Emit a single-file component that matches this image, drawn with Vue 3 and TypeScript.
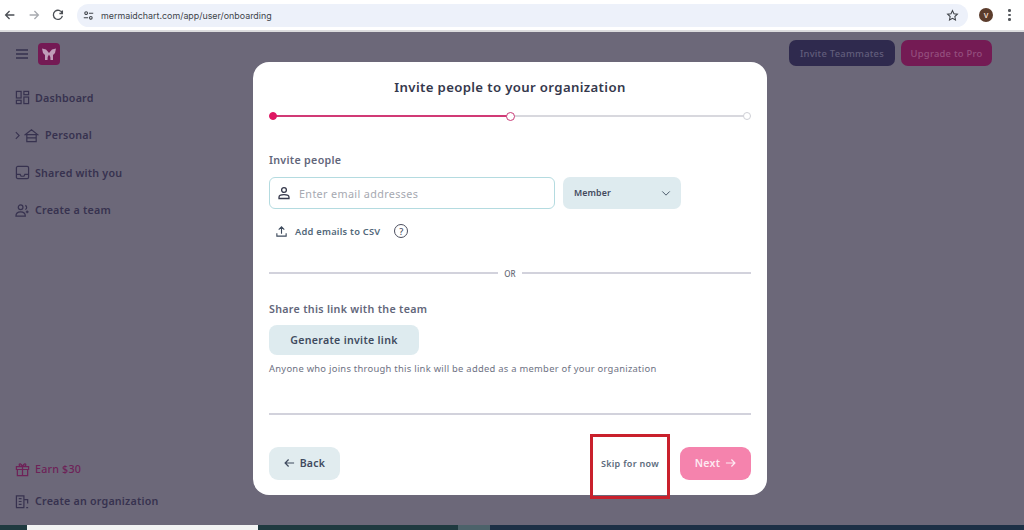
<script setup lang="ts">
const navItems: { label: string; kind: string }[] = [
  { label: 'Dashboard', kind: 'dash' },
  { label: 'Personal', kind: 'home' },
  { label: 'Shared with you', kind: 'inbox' },
  { label: 'Create a team', kind: 'team' },
]
</script>

<template>
  <div class="root">
    <header class="chrome">
      <svg class="cicon" viewBox="0 0 16 16"><path d="M13 8H3.500M7.500 3.500 3 8l4.500 4.500" /></svg>
      <svg class="cicon dim" viewBox="0 0 16 16"><path d="M3 8h9.500M8.500 3.500 13 8l-4.500 4.500" /></svg>
      <svg class="cicon" viewBox="0 0 16 16"><path d="M12.800 6A5.200 5.200 0 1 0 13 9M13 2.800V6.300H9.600" /></svg>
      <div class="omnibox">
        <svg class="tune" viewBox="0 0 14 14"><circle cx="4" cy="4" r="1.700" /><path d="M7.500 4H13M1 10h5.500" /><circle cx="10" cy="10" r="1.700" /></svg>
        <span class="url">mermaidchart.com/app/user/onboarding</span>
        <svg class="star" viewBox="0 0 16 16"><path d="m8 2 1.800 3.900 4.200.5-3.100 2.900.8 4.200L8 11.400l-3.700 2.100.8-4.200L2 6.400l4.200-.5z" /></svg>
      </div>
      <span class="avatar">V</span>
      <span class="kebab"><i></i><i></i><i></i></span>
    </header>

    <main class="page">
      <aside class="sidebar">
        <div class="brand">
          <svg class="burger" viewBox="0 0 14 12"><path d="M1 2h12M1 6h12M1 10h12" /></svg>
          <span class="logo">
            <svg viewBox="0 0 22 22"><path d="M4 5.500 8 6.500 11 10 14 6.500 18 5.500 17 10 15 12V17H12.500Q12.500 13 11 11.500 9.500 13 9.500 17H7V12L5 10z" /></svg>
          </span>
        </div>
        <nav class="nav">
          <a v-for="item in navItems" :key="item.label" class="nav-item" :class="{ nested: item.kind === 'home' }">
            <svg v-if="item.kind === 'home'" class="chev" viewBox="0 0 6 10"><path d="m1 1 4 4-4 4" /></svg>
            <svg class="nav-icon" viewBox="0 0 16 16">
              <template v-if="item.kind === 'dash'">
                <rect x="1.500" y="1.500" width="5" height="7" /><rect x="9.500" y="1.500" width="5" height="3.500" /><rect x="1.500" y="11" width="5" height="3.500" /><rect x="9.500" y="7.500" width="5" height="7" />
              </template>
              <template v-else-if="item.kind === 'home'">
                <path d="M1.500 7 8 2l6.500 5zM3 7v7.500h10V7M3 10.500h10" />
              </template>
              <template v-else-if="item.kind === 'inbox'">
                <rect x="1.500" y="1.500" width="13" height="13" rx="1.500" /><path d="M1.500 10h4l1 2h3l1-2h4" />
              </template>
              <template v-else>
                <circle cx="6" cy="4.500" r="2.500" /><path d="M1 14c0-6 10-6 10 0zM11 2.500a2.500 2.500 0 0 1 0 4.500M13 8v3M11.500 9.500h3" />
              </template>
            </svg>
            <span>{{ item.label }}</span>
          </a>
        </nav>
        <div class="side-bottom">
          <a class="nav-item earn">
            <svg class="nav-icon" viewBox="0 0 16 16"><path d="M1.500 5h13v3h-13zM2.500 8v6.500h11V8M8 5v9.500M8 5C6 5 4.500 4 4.500 2.800S6.500 1 8 5c1.500-4 3.500-3.400 3.500-2.200S10 5 8 5z" /></svg>
            <span>Earn $30</span>
          </a>
          <a class="nav-item">
            <svg class="nav-icon" viewBox="0 0 16 16"><path d="M1.500 14.500V2h8v12.500M9.500 6h4v4M1 14.500h9M4 5h3M4 8h3M4 11h3M12 14.500h2" /></svg>
            <span>Create an organization</span>
          </a>
        </div>
      </aside>

      <div class="top-actions">
        <button class="top-btn invite" type="button">Invite Teammates</button>
        <button class="top-btn upgrade" type="button">Upgrade to Pro</button>
      </div>

      <div class="overlay">
        <section class="card">
          <h1 class="title">Invite people to your organization</h1>

          <div class="stepper">
            <span class="dot done"></span>
            <span class="bar active"></span>
            <span class="dot current"></span>
            <span class="bar"></span>
            <span class="dot"></span>
          </div>

          <label class="label invite-label">Invite people</label>
          <div class="invite-row">
            <div class="field">
              <svg class="person" viewBox="0 0 14 14"><circle cx="7" cy="4" r="2.400" /><path d="M2 12.500v-1.300c0-1.500 1.500-2.500 5-2.500s5 1 5 2.500v1.300z" /></svg>
              <span class="placeholder">Enter email addresses</span>
            </div>
            <div class="select">
              <span>Member</span>
              <svg viewBox="0 0 12 8"><path d="m1.500 1.500 4.500 4.500 4.500-4.500" /></svg>
            </div>
          </div>

          <div class="csv">
            <svg class="upload" viewBox="0 0 14 14"><path d="M7 9.500V2M4 5l3-3 3 3M2 9v3h10V9" /></svg>
            <span>Add emails to CSV</span>
            <span class="help">?</span>
          </div>

          <div class="or"><span>OR</span></div>

          <label class="label share-label">Share this link with the team</label>
          <button class="generate" type="button">Generate invite link</button>
          <p class="hint">Anyone who joins through this link will be added as a member of your organization</p>

          <div class="rule"></div>

          <footer class="foot">
            <button class="back" type="button">
              <svg viewBox="0 0 12 10"><path d="M11 5H1.500M5 1.200 1.200 5 5 8.800" /></svg>
              Back
            </button>
            <span class="skip">Skip for now</span>
            <button class="next" type="button">
              Next
              <svg viewBox="0 0 12 10"><path d="M1 5h9.500M7 1.200 10.800 5 7 8.800" /></svg>
            </button>
          </footer>
          <span class="callout"></span>
        </section>
      </div>
    </main>

    <div class="taskbar">
      <span class="tb-a"></span><span class="tb-b"></span><span class="tb-c"></span><span class="tb-d"></span><span class="tb-e"></span>
    </div>
  </div>
</template>

<style>
html, body { margin: 0; background: #fff; }
</style>

<style scoped>
.root {
  width: 1024px;
  height: 530px;
  display: flex;
  flex-direction: column;
  overflow: hidden;
  font-family: "Noto Sans", "Open Sans", sans-serif;
}
.chrome {
  height: 32px;
  flex: none;
  box-sizing: border-box;
  border-bottom: 2px solid #dcdcde;
  background: #fff;
  display: flex;
  align-items: center;
  padding: 0 9px 0 3px;
}
.cicon { width: 14px; height: 14px; fill: none; stroke: #4b4f55; stroke-width: 1.500; margin: 0 5px 1px 0; flex: none; }
.cicon + .cicon { margin-left: 5px; }
.cicon.dim { stroke: #a8abb0; }
.omnibox {
  margin-left: 7px;
  width: 891px;
  height: 23px;
  flex: none;
  border-radius: 12px;
  background: #edf1fa;
  display: flex;
  align-items: center;
  padding: 0 9px 0 6px;
  box-sizing: border-box;
  margin-right: 11px;
}
.tune { width: 11px; height: 11px; fill: none; stroke: #3f4349; stroke-width: 1.300; }
.url { margin-left: 7px; font: 8.900px "Inter", sans-serif; color: #40444a; flex: 1; }
.star { width: 13px; height: 13px; fill: none; stroke: #3f4349; stroke-width: 1.300; }
.avatar {
  width: 14px; height: 14px; border-radius: 50%; flex: none;
  background: #5b3c2c; color: #f2dfcf;
  font: 700 7px "Liberation Sans", sans-serif;
  display: flex; align-items: center; justify-content: center;
}
.kebab { margin-left: 15px; display: flex; flex-direction: column; gap: 2px; }
.kebab i { width: 2.500px; height: 2.500px; border-radius: 50%; background: #55595e; }

.page { position: relative; flex: 1; min-height: 0; background: #6c6879; display: flex; }
.sidebar { width: 200px; display: flex; flex-direction: column; padding: 11px 0 8px 15px; box-sizing: border-box; }
.brand { display: flex; align-items: center; gap: 9px; height: 22px; }
.burger { width: 14px; height: 12px; fill: none; stroke: #35304e; stroke-width: 1.400; }
.logo { width: 22px; height: 22px; border-radius: 4px; background: #741a54; display: flex; }
.logo svg { width: 22px; height: 22px; fill: #bf9db9; }
.nav { margin-top: 14px; display: flex; flex-direction: column; }
.nav-item {
  height: 37.500px;
  display: flex;
  align-items: center;
  gap: 5px;
  font-size: 10.700px;
  font-weight: 600;
  letter-spacing: .2px;
  color: #37324f;
}
.nav-icon { width: 15px; height: 15px; fill: none; stroke: #37324f; stroke-width: 1.300; flex: none; }
.nav-item.nested { gap: 4px; }
.nav-item.nested .nav-icon { margin-right: 2px; }
.chev { width: 5px; height: 9px; fill: none; stroke: #37324f; stroke-width: 1.300; }
.side-bottom { margin-top: auto; display: flex; flex-direction: column; }
.side-bottom .nav-item { height: 32px; }
.earn { color: #6e2258; font-weight: 500; }
.earn .nav-icon { stroke: #6e2258; }

.top-actions { position: absolute; top: 8px; right: 32px; display: flex; gap: 6px; }
.top-btn {
  height: 26px;
  border: 0;
  border-radius: 7px;
  font: 500 9.400px "Noto Sans", sans-serif;
  letter-spacing: .25px;
  padding: 0;
}
.invite { width: 106px; background: #2f2a4e; color: #625e7c; }
.upgrade { width: 91px; background: #741b54; color: #94507f; }

.overlay { position: absolute; inset: 0; display: flex; justify-content: center; align-items: flex-start; padding: 30px 4px 0 0; }
.card {
  position: relative;
  width: 514px;
  height: 433px;
  box-sizing: border-box;
  padding: 16px 16px 0;
  background: #fff;
  border-radius: 16px;
  color: #363a50;
}
.title { margin: 0; height: 18px; line-height: 18px; text-align: center; font-size: 13.200px; font-weight: 600; letter-spacing: .35px; color: #35384c; }

.stepper { margin-top: 16px; height: 8px; display: flex; align-items: center; }
.dot { width: 8px; height: 8px; flex: none; box-sizing: border-box; border-radius: 50%; border: 1.500px solid #cfd0d6; background: #fff; margin: 0 -1px; z-index: 1; }
.dot:first-child { margin-left: 0; }
.dot:last-child { margin-right: 0; }
.dot.done { background: #df1763; border-color: #df1763; }
.dot.current { border-color: #c93c78; width: 9px; height: 9px; }
.bar { flex: 1; height: 1.200px; background: #d8d8de; }
.bar.active { background: #d13a76; }

.label { display: block; font-size: 10.700px; font-weight: 600; letter-spacing: .3px; color: #62667a; line-height: 14px; }
.invite-label { margin-top: 33px; }
.invite-row { margin-top: 10px; display: flex; gap: 8px; }
.field {
  width: 286px; height: 32px; box-sizing: border-box;
  border: 1px solid #b4dbe0; border-radius: 6px;
  display: flex; align-items: center; padding-left: 7px; gap: 8px;
}
.person { width: 14px; height: 14px; fill: none; stroke: #36394c; stroke-width: 1.300; }
.placeholder { font-size: 10.800px; letter-spacing: .35px; color: #a6a9b1; }
.select {
  width: 118px; height: 32px; box-sizing: border-box; border-radius: 7px;
  background: #deebef; display: flex; align-items: center; justify-content: space-between;
  padding: 0 10px 0 11px; font-size: 8.800px; font-weight: 600; letter-spacing: .1px; color: #434a5e;
}
.select svg { width: 10px; height: 7px; fill: none; stroke: #4d5d6d; stroke-width: 1.200; }
.csv { margin-top: 13px; height: 18px; display: flex; align-items: center; padding-left: 6px; font-size: 9.300px; font-weight: 600; letter-spacing: .25px; color: #52687a; }
.upload { width: 13px; height: 13px; fill: none; stroke: #3d4a5c; stroke-width: 1.200; margin-right: 7px; }
.help {
  margin-left: 14px; width: 14px; height: 14px; box-sizing: border-box; border: 1.200px solid #4b4e5e; border-radius: 50%;
  display: flex; align-items: center; justify-content: center; font-size: 9px; font-weight: 500; color: #4b4e5e;
}
.or {
  margin-top: 26px; height: 14px; display: flex; align-items: center; gap: 6px;
  font-size: 8px; font-weight: 500; color: #6a6d7a;
}
.or::before, .or::after { content: ""; flex: 1; height: 1.500px; background: #d2d2dc; }
.share-label { margin-top: 22px; }
.generate {
  display: block; margin-top: 9px; width: 150px; height: 30px; border: 0; border-radius: 8px;
  background: #deebef; color: #404a5e; font: 600 10.600px "Noto Sans", sans-serif; letter-spacing: .3px; padding: 0;
}
.hint { margin: 7px 0 0; height: 14px; line-height: 14px; font-size: 9.400px; letter-spacing: .27px; color: #6e7283; }
.rule { margin-top: 37px; height: 1.500px; background: #d2d2dc; }
.foot { margin-top: 32px; height: 33px; display: flex; align-items: center; }
.back, .next {
  width: 71px; height: 33px; border: 0; border-radius: 9px; padding: 0;
  display: flex; align-items: center; justify-content: center; gap: 5px;
  font: 600 10.500px "Noto Sans", sans-serif; letter-spacing: .3px;
}
.back { background: #e1ecef; color: #3f4a5e; }
.back svg, .next svg { width: 11px; height: 10px; fill: none; stroke: currentColor; stroke-width: 1.300; }
.next { background: #f583ad; color: #fdeaf2; }
.skip { margin-left: auto; margin-right: 21px; font-size: 9px; font-weight: 600; letter-spacing: .3px; color: #5c6b7c; }
.callout { position: absolute; left: 337px; top: 372px; width: 80px; height: 65px; box-sizing: border-box; border: 3px solid #c9202c; }

.taskbar { height: 5px; flex: none; display: flex; background: #1d3046; }
.tb-a { width: 27px; background: #1f3a40; }
.tb-b { width: 231px; background: #f2f3f3; }
.tb-c { width: 200px; background: #1f3a40; }
.tb-d { width: 32px; background: #4c626a; }
.tb-e { flex: 1; }
</style>
